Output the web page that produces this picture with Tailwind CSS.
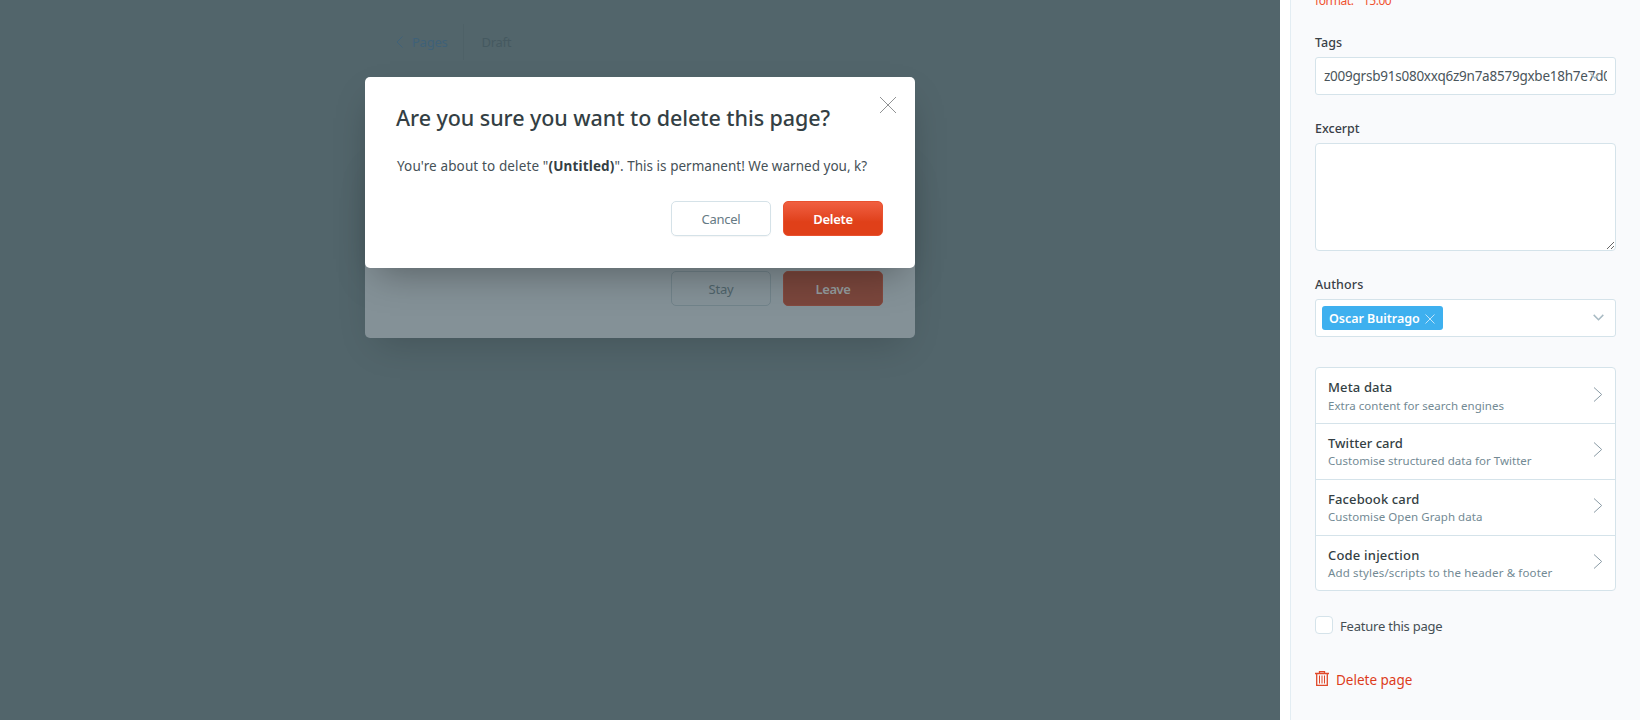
<!DOCTYPE html>
<html lang="en">
<head>
<meta charset="utf-8">
<title>Page settings</title>
<script src="https://cdn.jsdelivr.net/npm/@tailwindcss/browser@4"></script>
</head>
<body class="h-[720px] w-[1640px] overflow-hidden font-['Noto_Sans',sans-serif] text-[#394047]">
<div class="flex h-[720px] w-[1640px] overflow-hidden bg-white">
  <main class="relative h-full w-[1280px] bg-[#52656b]">
    <header class="flex h-[60px] items-end pl-[396px]">
      <div class="flex h-9 items-center border-r border-[#4e6167] pr-4 text-[#3f6178]">
        <svg class="mr-[9px] h-3 w-[7px]" viewBox="0 0 7 12" fill="none" stroke="currentColor"><path d="M6.500 .5 1 6l5.500 5.500"/></svg>
        <span class="text-[13px] leading-9 tracking-[-0.25px]">Pages</span>
      </div>
      <span class="pl-[17px] text-[13px] leading-9 tracking-[-0.3px] text-[#455960]">Draft</span>
    </header>

    <section class="absolute left-[365px] top-[147px] flex h-[191px] w-[550px] flex-col items-end rounded-[5px] bg-[#849197] px-8 pt-[124px] shadow-[0_16px_36px_-12px_rgba(0,0,0,0.18)]">
      <div class="flex gap-3">
        <button class="flex h-[35px] w-[100px] items-center justify-center rounded-[5px] border border-[#71838a] pt-[3px] text-[13px] tracking-[-0.15px] text-[#4f646b]">Stay</button>
        <button class="flex h-[35px] w-[100px] items-center justify-center rounded-[5px] border border-[#84493f] bg-[#7a463c] pt-[3px] text-[13px] font-semibold tracking-[-0.4px] text-[#939b9d]">Leave</button>
      </div>
    </section>

    <section class="absolute left-[365px] top-[77px] h-[191px] w-[550px] rounded-[5px] bg-white px-8 pt-[25px] shadow-[0_16px_36px_-12px_rgba(0,0,0,0.35)]">
      <svg class="absolute right-[18px] top-[19px] size-[18px]" viewBox="0 0 18 18" fill="none" stroke="#909294"><path d="M1 1l16 16M17 1 1 17"/></svg>
      <h1 class="-ml-px h-[32px] whitespace-nowrap text-[21.5px] font-medium leading-[31px] tracking-[-0.06px] text-[#343f44]">Are you sure you want to delete this page?</h1>
      <p class="mt-[21px] h-[22px] whitespace-nowrap text-[13.5px] leading-[22px] text-[#465157]"><span class="tracking-[0.13px]">You're about to delete "</span><b class="font-bold tracking-[0.15px] text-[#343f44]">(Untitled)</b><span class="tracking-[0.02px]">". This is permanent! We warned you, k?</span></p>
      <div class="mt-6 flex justify-end gap-3">
        <button class="flex h-[35px] w-[100px] items-center justify-center rounded-[5px] border border-[#d5e2e8] pt-[3px] text-[13px] tracking-[-0.25px] text-[#667a84] shadow-[0_1px_1px_rgba(0,0,0,0.04)]">Cancel</button>
        <button class="flex h-[35px] w-[100px] items-center justify-center rounded-[5px] border border-[#e9512f] bg-linear-to-b from-[#f05f40] via-[#e04019] via-60% to-[#e04019] pt-[3px] text-[13px] font-semibold tracking-[-0.3px] text-white">Delete</button>
      </div>
    </section>
  </main>

  <aside class="ml-[10px] flex h-full w-[350px] shrink-0 flex-col border-l border-[#e3edf3] bg-[#f9fafc] px-6">
    <p class="-mt-[9px] h-5 shrink-0 whitespace-pre text-[12px] leading-5 tracking-[-0.5px] text-[#f05230]">format:  "15:00"</p>
    <label class="mt-[22px] h-5 text-[12.5px] font-medium leading-5">Tags</label>
    <div class="mt-1 flex h-[38px] w-[301px] items-center rounded-[3px] border border-[#d5e3ea] bg-white px-[8px]">
      <div class="relative w-[286px] overflow-hidden whitespace-nowrap text-[13.5px] leading-[22px] tracking-[-0.24px] text-[#4a555b]">z009grsb91s080xxq6z9n7a8579gxbe18h7e7d0
        <svg class="absolute right-[7px] top-[8px] h-[6px] w-[10px]" viewBox="0 0 10 6" fill="none" stroke="#a8bac3" stroke-width="1.3"><path d="M.5 .5 5 5 9.500 .5"/></svg>
      </div>
    </div>
    <label class="mt-6 h-5 text-[12.5px] font-medium leading-5">Excerpt</label>
    <textarea class="mt-1 block h-[108px] w-[301px] resize rounded-[4px] border border-[#d5e3ea] bg-white"></textarea>
    <label class="mt-6 h-5 text-[12.5px] font-medium leading-5 tracking-[0.1px]">Authors</label>
    <div class="mt-1 flex h-[38px] w-[301px] items-center justify-between rounded-[3px] border border-[#d5e3ea] bg-white pl-[6px] pr-[11px]">
      <div class="flex h-6 w-[121px] items-center justify-between rounded-[3px] bg-[#3eb0ef] pl-[7px] pr-2 pt-px text-[12.5px] font-semibold leading-6 text-white">
        <span class="whitespace-nowrap pt-px tracking-[-0.03px]">Oscar Buitrago</span>
        <svg class="size-[10px]" viewBox="0 0 10 10" fill="none" stroke="#c0e4fa"><path d="M.5 .5l9 9M9.500 .5l-9 9"/></svg>
      </div>
      <svg class="-mt-px h-[7px] w-[11px]" viewBox="0 0 11 7" fill="none" stroke="#a8bac3" stroke-width="1.5"><path d="M.7 .9l4.800 4.800L10.300 .9"/></svg>
    </div>

    <ul class="mt-[30px] w-[301px] shrink-0 divide-y divide-[#d5e3ea] overflow-hidden rounded-[4px] border border-[#d5e3ea] bg-white">
      <li class="flex h-[56px] justify-between px-3 pt-[9px]">
        <div class="whitespace-nowrap"><h4 class="h-[19px] text-[13px] font-medium leading-[20px] tracking-[0.14px] text-[#343f44]">Meta data</h4><p class="text-[11.5px] leading-[19px] tracking-[0.03px] text-[#738a94]">Extra content for search engines</p></div>
        <svg class="mt-[10px] h-[15px] w-[10px]" viewBox="0 0 10 15" fill="none" stroke="#8a9ba5"><path d="M1 .5l7.700 7L1 14.500"/></svg>
      </li>
      <li class="flex h-[56px] justify-between px-3 pt-[9px]">
        <div class="whitespace-nowrap"><h4 class="h-[18px] text-[13px] font-medium leading-[20px] tracking-[0.04px] text-[#343f44]">Twitter card</h4><p class="text-[11.5px] leading-[19px] tracking-[0.03px] text-[#738a94]">Customise structured data for Twitter</p></div>
        <svg class="mt-[9px] h-[15px] w-[10px]" viewBox="0 0 10 15" fill="none" stroke="#8a9ba5"><path d="M1 .5l7.700 7L1 14.500"/></svg>
      </li>
      <li class="flex h-[56px] justify-between px-3 pt-[9px]">
        <div class="whitespace-nowrap"><h4 class="h-[18px] text-[13px] font-medium leading-[20px] tracking-[0.12px] text-[#343f44]">Facebook card</h4><p class="text-[11.5px] leading-[19px] tracking-[0.06px] text-[#738a94]">Customise Open Graph data</p></div>
        <svg class="mt-[9px] h-[15px] w-[10px]" viewBox="0 0 10 15" fill="none" stroke="#8a9ba5"><path d="M1 .5l7.700 7L1 14.500"/></svg>
      </li>
      <li class="flex h-[54px] justify-between px-3 pt-[9px]">
        <div class="whitespace-nowrap"><h4 class="h-[18px] text-[13px] font-medium leading-[20px] tracking-[0.2px] text-[#343f44]">Code injection</h4><p class="text-[11.5px] leading-[19px] tracking-[0.145px] text-[#738a94]">Add styles/scripts to the header &amp; footer</p></div>
        <svg class="mt-[9px] h-[15px] w-[10px]" viewBox="0 0 10 15" fill="none" stroke="#8a9ba5"><path d="M1 .5l7.700 7L1 14.500"/></svg>
      </li>
    </ul>

    <div class="mt-[25px] flex h-[18px] items-center">
      <span class="size-[18px] rounded-[4px] border border-[#d5e3ea] bg-white"></span>
      <span class="ml-[7px] whitespace-nowrap pt-px text-[13px] leading-5 tracking-[-0.22px] text-[#454f55]">Feature this page</span>
    </div>
    <a class="mt-[36px] flex h-5 items-center text-[13.5px] leading-5 text-[#dd3c1b]">
      <svg class="-mt-[3px] h-[15px] w-[14px]" viewBox="0 0 14 15" fill="none" stroke="#e0492a"><path stroke-width="1.300" d="M0 2.500h14M4.500 2V.7h5V2M1.700 2.500V14.300h10.600V2.500"/><path d="M4.500 4.500v8M7 4.500v8M9.500 4.500v8"/></svg>
      <span class="ml-[7px] whitespace-nowrap">Delete page</span>
    </a>
  </aside>
</div>
</body>
</html>
